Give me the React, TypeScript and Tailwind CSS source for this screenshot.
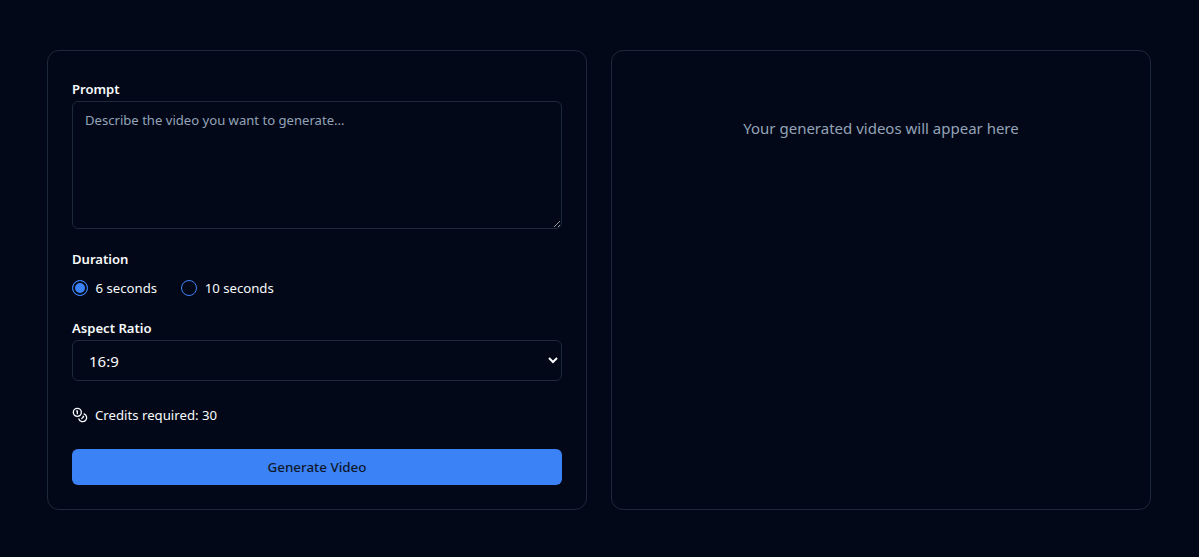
import { Coins } from "lucide-react";

const font = "font-['Noto_Sans',sans-serif]";

function Radio({ label, checked }: { label: string; checked?: boolean }) {
  return (
    <label className="flex items-center gap-[7.5px] text-[13.2px] leading-5 text-[#f8fafc]">
      <input
        type="radio"
        name="duration"
        defaultChecked={checked}
        className="h-4 w-4 appearance-none rounded-full border border-[#3b82f6] checked:bg-[#3b82f6] checked:shadow-[inset_0_0_0_2px_#020817]"
      />
      {label}
    </label>
  );
}

export default function App() {
  return (
    <div className={`${font} min-h-[557px] bg-[#020817] px-[47px] py-[50px] text-[#f8fafc]`}>
      <div className="flex h-[460px] w-[1104px] gap-6">
        <div className="flex h-full w-[540px] flex-col rounded-xl border border-[#1e293b] px-6 pb-6 pt-7">
          <label className="mb-0.5 block text-[13.1px] font-semibold leading-5">Prompt</label>
          <textarea
            placeholder="Describe the video you want to generate..."
            className="block h-32 w-full rounded-md border border-[#1e293b] bg-transparent px-3 py-2 text-[13.1px] leading-5 outline-none placeholder:text-[#94a3b8]"
          />
          <label className="mb-[9px] mt-5 block text-[13.1px] font-semibold leading-5">Duration</label>
          <div className="flex gap-6">
            <Radio label="6 seconds" checked />
            <Radio label="10 seconds" />
          </div>
          <label className="mb-0.5 mt-[20px] block text-[13.1px] font-semibold leading-5">Aspect Ratio</label>
          <select className="h-[41px] w-full rounded-md border border-[#1e293b] bg-[#020817] pl-3 pr-3 text-[15px] text-[#f8fafc] outline-none">
            <option>16:9</option>
            <option>9:16</option>
            <option>1:1</option>
          </select>
          <div className="mt-6 flex items-center gap-[7px] text-[13.2px] leading-5">
            <Coins size={16} />
            <span>Credits required: 30</span>
          </div>
          <button className="mt-6 h-9 w-full rounded-md bg-[#3b82f6] text-[13.4px] font-medium text-[#0f172a]">
            Generate Video
          </button>
        </div>
        <div className="h-full w-[540px] rounded-xl border border-[#1e293b] p-6 pt-[67px] text-center text-[15px] leading-5 text-[#94a3b8]">
          Your generated videos will appear here
        </div>
      </div>
    </div>
  );
}
